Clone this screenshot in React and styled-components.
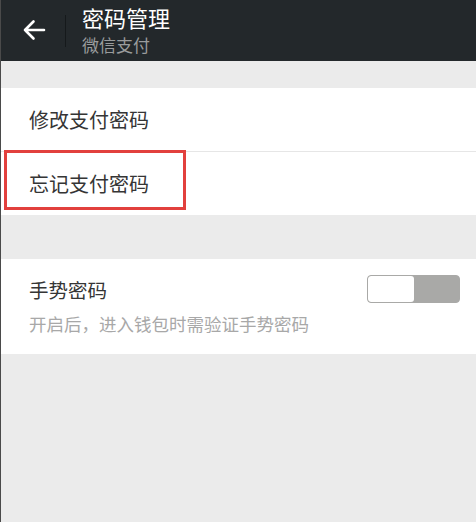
import React, { useState } from 'react'
import styled, { createGlobalStyle } from 'styled-components'

const GlobalStyle = createGlobalStyle`
  html, body {
    margin: 0;
    padding: 0;
    background: #ebebeb;
    font-family: "Noto Sans CJK SC", "Noto Sans", sans-serif;
  }
`

const Page = styled.div`
  width: 476px;
  height: 522px;
  background: #ebebeb;
  border-left: 1px solid #4a4a4a;
  box-sizing: border-box;
  overflow: hidden;
`

const TopBar = styled.header`
  height: 61px;
  background: #23282b;
  display: flex;
  align-items: center;
`

const BackButton = styled.button`
  width: 64px;
  height: 61px;
  display: flex;
  align-items: center;
  justify-content: center;
  background: none;
  border: none;
  padding: 0 0 2px 2px;
  cursor: pointer;
`

const Divider = styled.div`
  width: 1px;
  height: 32px;
  background: #15191b;
  margin-right: 16px;
`

const Titles = styled.div`
  display: flex;
  flex-direction: column;
  gap: 4px;
  margin-top: -2px;
`

const Title = styled.div`
  color: #ffffff;
  font-size: 22px;
  line-height: 26px;
`

const Subtitle = styled.div`
  color: #9a9c9d;
  font-size: 17px;
  line-height: 22px;
`

const Group = styled.section`
  background: #ffffff;
  margin-top: ${p => p.$gap}px;
`

const Row = styled.div`
  position: relative;
  height: ${p => p.$h}px;
  display: flex;
  align-items: center;
  padding: 0 16px 0 28px;
  font-size: 20px;
  color: #353535;
  & + & {
    border-top: 1px solid #e6e6e6;
  }
`

const Highlight = styled.div`
  position: absolute;
  left: 3px;
  top: -2px;
  width: 176px;
  height: 54px;
  border: 3px solid #e2403d;
`

const SwitchBlock = styled.div`
  padding: 16px 16px 19px 28px;
`

const SwitchLine = styled.div`
  display: flex;
  align-items: center;
  justify-content: space-between;
  font-size: 19.5px;
  color: #353535;
  height: 28px;
`

const Hint = styled.div`
  margin-top: 10px;
  font-size: 17.5px;
  color: #a8a8a8;
  line-height: 22px;
`

const Toggle = styled.button`
  width: 93px;
  height: 28px;
  padding: 0;
  border: 1px solid #a9a9a7;
  border-radius: 4px;
  background: #a9a9a7;
  display: flex;
  overflow: hidden;
  cursor: pointer;
  justify-content: ${p => (p.$on ? 'flex-end' : 'flex-start')};
`

const Knob = styled.span`
  width: 46px;
  height: 100%;
  background: #ffffff;
  border-radius: 3px;
`

function BackArrow () {
  return (
    <svg width="24" height="22" viewBox="0 0 24 22" fill="none">
      <path d="M22 11H3M11.5 2.5L3 11l8.5 8.5" stroke="#fff" strokeWidth="2.6" strokeLinecap="round" strokeLinejoin="round" />
    </svg>
  )
}

export default function App () {
  const [gesture, setGesture] = useState(false)
  return (
    <Page>
      <GlobalStyle />
      <TopBar>
        <BackButton aria-label="back">
          <BackArrow />
        </BackButton>
        <Divider />
        <Titles>
          <Title>密码管理</Title>
          <Subtitle>微信支付</Subtitle>
        </Titles>
      </TopBar>

      <Group $gap={27}>
        <Row $h={63}>修改支付密码</Row>
        <Row $h={63}>
          <Highlight />
          忘记支付密码
        </Row>
      </Group>

      <Group $gap={44}>
        <SwitchBlock>
          <SwitchLine>
            手势密码
            <Toggle $on={gesture} onClick={() => setGesture(!gesture)} aria-label="toggle">
              <Knob />
            </Toggle>
          </SwitchLine>
          <Hint>开启后，进入钱包时需验证手势密码</Hint>
        </SwitchBlock>
      </Group>
    </Page>
  )
}
